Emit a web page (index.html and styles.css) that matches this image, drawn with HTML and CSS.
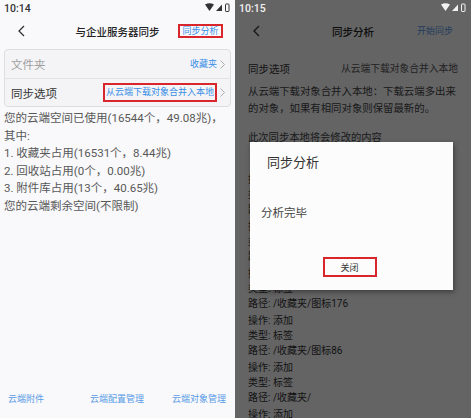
FILE: index.html
```html
<!DOCTYPE html>
<html lang="zh">
<head>
  <meta charset="UTF-8" />
  <meta name="viewport" content="width=device-width, initial-scale=1.0"/>
  <title>与企业服务器同步</title>
  <link rel="stylesheet" href="styles.css">
</head>
<body>
  <div class="shots">
    <!-- 同步设置页 -->
    <section class="phone phone-main">
      <div class="status">
        <span>10:14</span>
        <svg class="status-icons" width="25" height="10" viewBox="0 0 25 10">
          <path d="M0 1.5 Q4.5 -1 9 1.5 L4.5 8 Z" fill="currentColor"/>
          <path d="M11 8 L17 8 L17 1.5 Z" fill="currentColor"/>
          <rect x="20.5" y="1" width="3.5" height="7.5" rx="0.6" fill="none" stroke="currentColor" stroke-width="1"/>
        </svg>
      </div>
      <header class="topbar">
        <svg class="back" width="7" height="12" viewBox="0 0 7 12"><polyline points="6,1 1,6 6,11" fill="none" stroke="currentColor" stroke-width="1.3"/></svg>
        <h1>与企业服务器同步</h1>
        <a class="action marked">同步分析</a>
      </header>
      <div class="card">
        <div class="row">
          <span class="row-label muted">文件夹</span>
          <span class="row-value">收藏夹</span>
          <svg class="chev" width="5" height="9" viewBox="0 0 5 9"><polyline points="0.5,0.5 4.5,4.5 0.5,8.5" fill="none" stroke="currentColor" stroke-width="0.9"/></svg>
        </div>
        <div class="row">
          <span class="row-label">同步选项</span>
          <span class="row-value marked">从云端下载对象合并入本地</span>
          <svg class="chev" width="5" height="9" viewBox="0 0 5 9"><polyline points="0.5,0.5 4.5,4.5 0.5,8.5" fill="none" stroke="currentColor" stroke-width="0.9"/></svg>
        </div>
      </div>
      <div class="usage">
        <p>您的云端空间已使用(16544个，49.08兆)，</p>
        <p>其中:</p>
        <p>1. 收藏夹占用(16531个，8.44兆)</p>
        <p>2. 回收站占用(0个，0.00兆)</p>
        <p>3. 附件库占用(13个，40.65兆)</p>
        <p>您的云端剩余空间(不限制)</p>
      </div>
      <nav class="links">
        <a>云端附件</a>
        <a>云端配置管理</a>
        <a>云端对象管理</a>
      </nav>
    </section>

    <!-- 同步分析页，弹出对话框 -->
    <section class="phone phone-sync">
      <div class="status">
        <span>10:15</span>
        <svg class="status-icons" width="25" height="10" viewBox="0 0 25 10">
          <path d="M0 1.5 Q4.5 -1 9 1.5 L4.5 8 Z" fill="currentColor"/>
          <path d="M11 8 L17 8 L17 1.5 Z" fill="currentColor"/>
          <rect x="20.5" y="1" width="3.5" height="7.5" rx="0.6" fill="none" stroke="currentColor" stroke-width="1"/>
        </svg>
      </div>
      <header class="topbar">
        <svg class="back" width="7" height="12" viewBox="0 0 7 12"><polyline points="6,1 1,6 6,11" fill="none" stroke="currentColor" stroke-width="1.3"/></svg>
        <h1>同步分析</h1>
        <a class="action action-start">开始同步</a>
      </header>
      <div class="sync-option">
        <span>同步选项</span>
        <span class="sync-value">从云端下载对象合并入本地</span>
      </div>
      <p class="note">从云端下载对象合并入本地：下载云端多出来的对象，如果有相同对象则保留最新的。</p>
      <p class="changes-title">此次同步本地将会修改的内容</p>
      <div class="changes">
        <div class="change"><p>操作: 添加</p><p>类型: 标签</p><p>路径: /收藏夹/图标203</p></div>
        <div class="change"><p>操作: 添加</p><p>类型: 标签</p><p>路径: /收藏夹/图标188</p></div>
        <div class="change"><p>操作: 添加</p><p>类型: 标签</p><p>路径: /收藏夹/图标176</p></div>
        <div class="change"><p>操作: 添加</p><p>类型: 标签</p><p>路径: /收藏夹/图标86</p></div>
        <div class="change"><p>操作: 添加</p><p>类型: 标签</p><p>路径: /收藏夹/</p></div>
        <div class="change"><p>操作: 添加</p><p>类型: 标签</p><p>路径: /收藏夹/图标12</p></div>
      </div>
      <div class="dim"></div>
      <div class="dialog">
        <h2>同步分析</h2>
        <p>分析完毕</p>
        <button class="marked">关闭</button>
      </div>
    </section>
  </div>
</body>
</html>
```

FILE: styles.css
```css
* { box-sizing: border-box; }
body {
  margin: 0;
  width: 471px;
  height: 418px;
  overflow: hidden;
  background: #636363;
  font-family: Roboto, "Noto Sans CJK SC", sans-serif;
}
p { margin: 0; }
.shots { display: flex; height: 418px; }
.phone {
  position: relative;
  display: flex;
  flex-direction: column;
  height: 418px;
  background: #f9f9fb;
  color: #333;
  overflow: hidden;
}
.phone > * { flex-shrink: 0; }
.phone-main { width: 235px; }
.phone-sync { width: 236px; }

.status {
  height: 16px;
  display: flex;
  align-items: center;
  justify-content: space-between;
  padding: 0 5px 0 4px;
  font-size: 10.5px;
  font-weight: 500;
  color: #333;
}
.topbar {
  height: 30px;
  display: grid;
  grid-template-columns: 1fr auto 1fr;
  align-items: center;
}
.back { justify-self: start; margin-left: 18px; color: #333; }
.topbar h1 { margin: 0; font-size: 10.5px; font-weight: 500; color: #222; }
.action { justify-self: end; margin-right: 12px; font-size: 9px; line-height: 10px; color: #3a8ee6; }
.marked { border: 2px solid #d9252c; }
.topbar .marked { padding: 0 2.5px; }

.card {
  margin: 3px 4px 0;
  border: 1px solid #dedede;
  border-radius: 4px;
  background: #f4f4f6;
}
.row {
  display: flex;
  align-items: center;
  height: 28px;
  padding: 0 5px 0 6px;
}
.row + .row { border-top: 1px solid #e2e2e2; }
.row-label { flex: 1; font-size: 11.5px; color: #333; }
.row-label.muted { color: #a0a0a0; }
.row-value { font-size: 9px; line-height: 15px; color: #3a8ee6; }
.row-value.marked { padding: 0 1px; }
.chev { margin-left: 3px; color: #a5a5a5; }

.usage {
  margin: 3px 4px 0;
  font-size: 11.5px;
  line-height: 17.5px;
  color: #585858;
}
.links {
  margin-top: auto;
  height: 40px;
  display: grid;
  grid-template-columns: 82px 82px auto;
  align-items: center;
  padding-left: 8px;
  font-size: 9px;
  color: #5a9be6;
}

/* 同步分析页 */
.phone-sync .status { position: relative; z-index: 2; color: #f2f2f2; }
.action-start { margin-right: 18px; color: #5a9be6; }
.sync-option {
  display: flex;
  justify-content: space-between;
  align-items: center;
  height: 20px;
  margin-top: 12px;
  padding: 0 13px;
  font-size: 10.5px;
  color: #333;
}
.sync-value { font-size: 9.75px; color: #555; }
.note {
  margin-top: 6px;
  padding: 0 12px 0 13px;
  font-size: 10.4px;
  line-height: 16.5px;
  color: #444;
}
.changes-title {
  margin-top: 13px;
  padding-left: 13px;
  font-size: 10.3px;
  line-height: 16px;
  color: #444;
}
.changes {
  margin-top: 26px;
  padding-left: 13px;
  font-size: 10px;
  line-height: 15px;
  color: #333;
}
.change { margin-bottom: 2px; }

.dim {
  position: absolute;
  inset: 0;
  z-index: 1;
  background: rgba(0, 0, 0, 0.6);
}
.dialog {
  position: absolute;
  left: 15px;
  top: 142px;
  z-index: 2;
  width: 203px;
  height: 148px;
  display: flex;
  flex-direction: column;
  padding: 12px 0 13px;
  background: #fcfcfc;
  box-shadow: 1px 2px 5px rgba(0, 0, 0, 0.4);
}
.dialog h2 { margin: 0 0 0 17px; font-size: 13px; line-height: 18px; font-weight: 400; color: #333; }
.dialog p { margin: 33px 0 0 11px; font-size: 11.5px; line-height: 16px; color: #444; }
.dialog button {
  margin: auto auto 0;
  width: 54px;
  height: 20px;
  padding: 0;
  background: transparent;
  font: 9px Roboto, "Noto Sans CJK SC", sans-serif;
  color: #333;
  transform: translateX(-2px);
}
```
